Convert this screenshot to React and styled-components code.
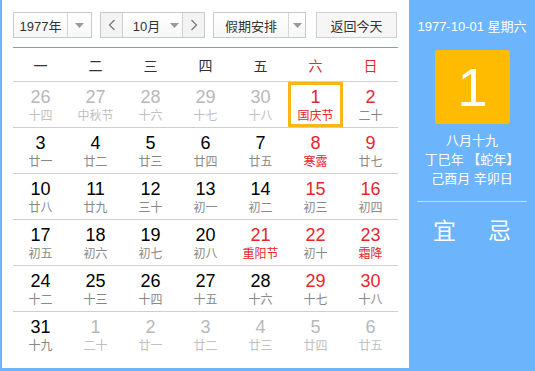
import React from "react";
import styled, { createGlobalStyle } from "styled-components";

const GlobalStyle = createGlobalStyle`
    body {
        margin: 0;
        font-family: "Liberation Sans", "Noto Sans CJK SC", sans-serif;
    }
`;

const cjk = `"Liberation Sans", "Noto Sans CJK SC", sans-serif`;

const weekdays = ["一", "二", "三", "四", "五", "六", "日"];

// [day, lunar, out-of-month, festival]
const weeks = [
    [[26, "十四", 1], [27, "中秋节", 1], [28, "十六", 1], [29, "十七", 1], [30, "十八", 1], [1, "国庆节", 0, 1], [2, "二十"]],
    [[3, "廿一"], [4, "廿二"], [5, "廿三"], [6, "廿四"], [7, "廿五"], [8, "寒露", 0, 1], [9, "廿七"]],
    [[10, "廿八"], [11, "廿九"], [12, "三十"], [13, "初一"], [14, "初二"], [15, "初三"], [16, "初四"]],
    [[17, "初五"], [18, "初六"], [19, "初七"], [20, "初八"], [21, "重阳节", 0, 1], [22, "初十"], [23, "霜降", 0, 1]],
    [[24, "十二"], [25, "十三"], [26, "十四"], [27, "十五"], [28, "十六"], [29, "十七"], [30, "十八"]],
    [[31, "十九"], [1, "二十", 1], [2, "廿一", 1], [3, "廿二", 1], [4, "廿三", 1], [5, "廿四", 1], [6, "廿五", 1]],
];

const Caret = () => (
    <svg width="9" height="5" viewBox="0 0 9 5">
        <path d="M0 0h9L4.5 5z" fill="#999" />
    </svg>
);

const Chevron = ({ dir }) => (
    <svg width="8" height="12" viewBox="0 0 8 12">
        <path
            d={dir === "left" ? "M6.5 1L1.5 6l5 5" : "M1.5 1l5 5-5 5"}
            fill="none"
            stroke="#777"
            strokeWidth="1.2"
        />
    </svg>
);

const App = () => {
    return (
        <>
            <GlobalStyle />
            <Frame>
                <Main>
                    <Toolbar>
                        <Select $w={79}>
                            <SelectText>1977年</SelectText>
                            <SelectArrow>
                                <Caret />
                            </SelectArrow>
                        </Select>
                        <Select $w={105} $gap={8}>
                            <NavButton>
                                <Chevron dir="left" />
                            </NavButton>
                            <SelectText $center>10月</SelectText>
                            <SelectArrow $w={16} $plain>
                                <Caret />
                            </SelectArrow>
                            <NavButton $right>
                                <Chevron dir="right" />
                            </NavButton>
                        </Select>
                        <Select $w={93} $gap={7}>
                            <SelectText>假期安排</SelectText>
                            <SelectArrow $w={16}>
                                <Caret />
                            </SelectArrow>
                        </Select>
                        <TodayButton>返回今天</TodayButton>
                    </Toolbar>
                    <Grid>
                        <HeadRow>
                            {weekdays.map((w, i) => (
                                <HeadCell key={w} $weekend={i > 4}>
                                    {w}
                                </HeadCell>
                            ))}
                        </HeadRow>
                        {weeks.map((week, r) => (
                            <Week key={r} $last={r === weeks.length - 1}>
                                {week.map(([day, lunar, out, fest], i) => (
                                    <Day
                                        key={i}
                                        $selected={r === 0 && i === 5}
                                    >
                                        <DayNum
                                            $out={out}
                                            $red={!out && (i > 4 || fest)}
                                        >
                                            {day}
                                        </DayNum>
                                        <Lunar $out={out} $fest={!out && fest}>
                                            {lunar}
                                        </Lunar>
                                    </Day>
                                ))}
                            </Week>
                        ))}
                    </Grid>
                </Main>
                <Side>
                    <SideDate>1977-10-01 星期六</SideDate>
                    <BigDay>1</BigDay>
                    <LunarInfo>
                        <div>八月十九</div>
                        <div>丁巳年 【蛇年】</div>
                        <div>己酉月 辛卯日</div>
                    </LunarInfo>
                    <Divider />
                    <YiJi>
                        <span>宜</span>
                        <span>忌</span>
                    </YiJi>
                </Side>
            </Frame>
        </>
    );
};

export default App;

const Frame = styled.div`
    display: flex;
    width: 535px;
    height: 371px;
    box-sizing: border-box;
    padding: 0 0 3px 2px;
    background: #6cb5fc;
`;

const Main = styled.div`
    width: 407px;
    background: #fff;
    box-sizing: border-box;
    padding: 12px 10px 0 11px;
`;

const Toolbar = styled.div`
    display: flex;
    align-items: center;
    height: 26px;
    gap: 8px;
`;

const Select = styled.div`
    display: flex;
    align-items: stretch;
    width: ${(p) => p.$w}px;
    height: 26px;
    box-sizing: border-box;
    border: 1px solid #c9c9c9;
    background: linear-gradient(#fff, #f7f7f7);
    margin-right: ${(p) => (p.$gap ? p.$gap - 8 : 0)}px;
    font-family: ${cjk};
    font-size: 13px;
    color: #333;
`;

const SelectText = styled.div`
    flex: 1;
    display: flex;
    align-items: center;
    justify-content: center;
    padding-left: ${(p) => (p.$center ? 4 : 0)}px;
`;

const SelectArrow = styled.div`
    width: ${(p) => p.$w || 23}px;
    display: flex;
    align-items: center;
    justify-content: center;
    border-left: ${(p) => (p.$plain ? "none" : "1px solid #d6d6d6")};
`;

const NavButton = styled.div`
    width: 21px;
    display: flex;
    align-items: center;
    justify-content: center;
    background: #f3f3f3;
    border-left: ${(p) => (p.$right ? "1px solid #d0d0d0" : "none")};
    border-right: ${(p) => (p.$right ? "none" : "1px solid #d0d0d0")};
`;

const TodayButton = styled.div`
    margin-left: 3px;
    width: 81px;
    height: 26px;
    box-sizing: border-box;
    border: 1px solid #d0d0d0;
    background: #f6f6f6;
    display: flex;
    align-items: center;
    justify-content: center;
    font-family: ${cjk};
    font-size: 13px;
    color: #333;
`;

const Grid = styled.div`
    margin-top: 9px;
    width: 385px;
    border-top: 1px solid #5aa8f5;
`;

const HeadRow = styled.div`
    display: grid;
    grid-template-columns: repeat(7, 1fr);
    height: 33px;
    border-bottom: 1px solid #cfcfcf;
`;

const HeadCell = styled.div`
    display: flex;
    align-items: center;
    justify-content: center;
    font-family: ${cjk};
    font-size: 14px;
    color: ${(p) => (p.$weekend ? "#e8262e" : "#333")};
`;

const Week = styled.div`
    display: grid;
    grid-template-columns: repeat(7, 1fr);
    height: 45px;
    border-bottom: ${(p) => (p.$last ? "none" : "1px solid #cfcfcf")};
`;

const Day = styled.div`
    display: flex;
    flex-direction: column;
    align-items: center;
    justify-content: center;
    box-sizing: border-box;
    border: 3px solid ${(p) => (p.$selected ? "#fbb715" : "transparent")};
    padding-top: 1px;
`;

const DayNum = styled.div`
    font-family: "Liberation Sans", Arial, sans-serif;
    font-size: 18px;
    line-height: 20px;
    color: ${(p) => (p.$out ? "#b8b8b8" : p.$red ? "#e8262e" : "#000")};
`;

const Lunar = styled.div`
    font-family: ${cjk};
    font-size: 12px;
    line-height: 16px;
    margin-top: 1px;
    color: ${(p) => (p.$out ? "#c0c0c0" : p.$fest ? "#e8262e" : "#888")};
`;

const Side = styled.div`
    flex: 1;
    display: flex;
    flex-direction: column;
    align-items: center;
    color: #fff;
    font-family: ${cjk};
`;

const SideDate = styled.div`
    margin-top: 18px;
    font-size: 13px;
    line-height: 18px;
`;

const BigDay = styled.div`
    margin-top: 14px;
    margin-left: 1px;
    width: 75px;
    height: 74px;
    border-radius: 3px;
    background: #ffbb00;
    display: flex;
    align-items: center;
    justify-content: center;
    font-family: "Liberation Sans", Arial, sans-serif;
    font-size: 54px;
    line-height: 1;
`;

const LunarInfo = styled.div`
    margin-top: 7px;
    font-size: 13px;
    line-height: 19px;
    text-align: center;
`;

const Divider = styled.div`
    margin-top: 13px;
    width: 110px;
    height: 1px;
    background: rgba(255, 255, 255, 0.55);
`;

const YiJi = styled.div`
    margin-top: 15px;
    display: flex;
    gap: 32px;
    font-size: 23px;
    line-height: 28px;
`;
